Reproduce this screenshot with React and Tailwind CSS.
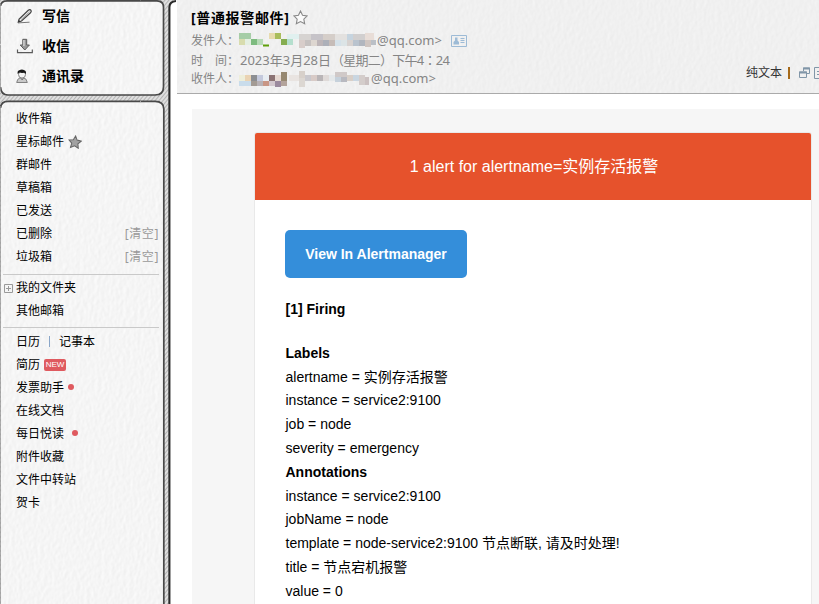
import React from "react";

const SANS = "font-['Noto_Sans','Noto_Sans_CJK_SC',sans-serif]";

function Defs() {
  return (
    <svg width="0" height="0" className="absolute">
      <defs>
        <filter id="paper" x="0" y="0" width="100%" height="100%" colorInterpolationFilters="sRGB">
          <feTurbulence type="fractalNoise" baseFrequency="0.28 0.19" numOctaves="2" seed="4" result="n" />
          <feDiffuseLighting in="n" surfaceScale="0.08" diffuseConstant="1.155" lightingColor="#fdfdfd">
            <feDistantLight azimuth="200" elevation="57" />
          </feDiffuseLighting>
        </filter>
        <filter id="rough" filterUnits="userSpaceOnUse" x="-10" y="-10" width="200" height="640">
          <feTurbulence type="fractalNoise" baseFrequency="0.3" numOctaves="2" seed="7" result="n" />
          <feDisplacementMap in="SourceGraphic" in2="n" scale="1.5" xChannelSelector="R" yChannelSelector="G" />
        </filter>
        <pattern id="hatch" width="3" height="3" patternUnits="userSpaceOnUse" patternTransform="rotate(40)">
          <rect width="3" height="3" fill="#dfdfdf" />
          <rect width="1" height="3" fill="#b4b4b4" />
        </pattern>
      </defs>
    </svg>
  );
}

function Paper({ className = "" }) {
  return (
    <svg className={`pointer-events-none absolute inset-0 h-full w-full ${className}`}>
      <rect width="100%" height="100%" filter="url(#paper)" />
    </svg>
  );
}

function SketchFrame() {
  return (
    <svg className="pointer-events-none absolute left-0 top-0" width="180" height="604">
      <path
        fill="url(#hatch)"
        fillRule="evenodd"
        d="M0 0H177Q170 0 170 6V604H0ZM1 6Q1 1 7 1H157Q163 1 163 7V87Q163 95 155 95H8Q1 95 1 87ZM1 108Q1 101 8 101H155Q163 101 163 109V604H1Z"
      />
      <g filter="url(#rough)" fill="none" stroke="#484848" strokeWidth="1.700">
        <path d="M0.500 6Q1 1 7 0.800H157Q163.500 1 163.500 7V87Q163.500 95 155 95H8Q1 95 0.500 87" />
        <path d="M0.500 108Q1 101.300 8 101.300H155Q163.800 101.300 163.800 109V610" />
        <path d="M169.400 610V7Q169.600 1.500 176 1" stroke="#2b2b2b" strokeWidth="2.100" />
        <path d="M0.300 4V91M0.300 106V610" stroke="#999" strokeWidth="0.900" />
      </g>
    </svg>
  );
}

function PenIcon() {
  return (
    <svg width="18" height="17" viewBox="0 0 18 17" fill="none">
      <path d="M3 11.300 12.300 2.300Q14 1 15 2.400Q15.700 3.700 14.500 4.700L5.500 13 2.300 14Z" fill="#eee" stroke="#444" strokeWidth="1.200" />
      <path d="M5 11.600 13.700 3.700" stroke="#aaa" />
      <path d="M2 14.900 13.500 14.200" stroke="#777" strokeWidth="1" />
      <path d="M2 14.500 3 12 4.500 13.500Z" fill="#333" />
    </svg>
  );
}

function ReceiveIcon() {
  return (
    <svg width="18" height="17" viewBox="0 0 18 17" fill="none">
      <path d="M6.800 1.300H10.700V7H13.400L8.800 12 4.200 7H6.800Z" fill="#999" stroke="#5a5a5a" strokeWidth="1" />
      <path d="M7.900 2V8" stroke="#e2e2e2" strokeWidth="1.200" />
      <path d="M1.500 11.500V14.700H16.300V11.500" stroke="#5a5a5a" strokeWidth="1.200" />
    </svg>
  );
}

function ContactIcon() {
  return (
    <svg width="18" height="17" viewBox="0 0 18 17" fill="none">
      <path d="M0.700 14.500Q1 10.800 4 9.800H7.500Q10.800 10.500 11.300 14.500Z" fill="#c9c9c9" stroke="#777" strokeWidth="0.900" />
      <ellipse cx="6" cy="6.500" rx="3.500" ry="3.600" fill="#f3f3f3" stroke="#777" strokeWidth="0.900" />
      <path d="M1.700 6Q1 3 3.200 2.200Q6 0.600 8.300 2.200Q10.500 3 9.900 6L8.400 4.700 6 5 3.500 4.500Z" fill="#181818" />
      <path d="M4.800 10.300 6.200 12 7.500 10.300" stroke="#666" strokeWidth="0.800" />
    </svg>
  );
}

const STAR = "M7 0.900 8.900 4.900 13.200 5.500 10.100 8.500 10.900 12.900 7 10.800 3.100 12.900 3.900 8.500 0.800 5.500 5.100 4.900Z";

function Main({ icon, children }) {
  return (
    <div className="flex h-[30px] items-center pl-4">
      {icon}
      <span className="ml-2 text-[14px] font-bold leading-[30px] text-black">{children}</span>
    </div>
  );
}

function Row({ children, clear }) {
  return (
    <div className="flex h-[23px] items-center pl-4 pr-[5px] text-[12px] leading-[23px] text-black">
      {children}
      {clear && <span className="ml-auto tracking-[0.600px] text-[#999]">[清空]</span>}
    </div>
  );
}

const Rule = ({ className }) => <div className={`ml-[3px] w-[156px] border-t border-[#c9c9c9] ${className}`} />;
const Dot = ({ className }) => <span className={`-mt-px h-1.5 w-1.5 rounded-full bg-[#df5a5f] ${className}`} />;

function Sidebar() {
  return (
    <aside className="relative h-full w-[177px] shrink-0 bg-white">
      <div className="absolute inset-y-0 left-0 w-[164px] overflow-hidden">
        <Paper />
      </div>
      <SketchFrame />
      <div className="relative w-[164px]">
        <nav className="h-[107px] pt-px">
          <Main icon={<PenIcon />}>写信</Main>
          <Main icon={<ReceiveIcon />}>收信</Main>
          <Main icon={<ContactIcon />}>通讯录</Main>
        </nav>
        <nav>
          <Row>收件箱</Row>
          <Row>
            星标邮件
            <svg className="ml-1" width="14" height="14" viewBox="0 0 14 14">
              <path d={STAR} fill="#a2a2a2" stroke="#666" strokeWidth="1" transform="rotate(6 7 7)" />
            </svg>
          </Row>
          <Row>群邮件</Row>
          <Row>草稿箱</Row>
          <Row>已发送</Row>
          <Row clear>已删除</Row>
          <Row clear>垃圾箱</Row>
          <Rule className="mb-[1px] mt-[6px]" />
          <div className="relative">
            <svg className="absolute left-1 top-[8px]" width="9" height="9" fill="none" stroke="#999">
              <path d="M.5.5H8.500V8.500H.5ZM2 4.500H7M4.500 2V7" />
            </svg>
            <Row>我的文件夹</Row>
          </div>
          <Row>其他邮箱</Row>
          <Rule className="mb-[2px] mt-[5px]" />
          <Row>
            日历
            <span className="ml-[9px] mr-[9px] h-[11px] w-px bg-[#8aa6c8]" />
            记事本
          </Row>
          <Row>
            简历
            <span className="ml-1 h-3 w-[22px] rounded-[2px] bg-[#df5a5f] text-center font-['Liberation_Sans',sans-serif] text-[8px] leading-[12.500px] text-white">
              NEW
            </span>
          </Row>
          <Row>
            发票助手
            <Dot className="ml-1" />
          </Row>
          <Row>在线文档</Row>
          <Row>
            每日悦读
            <Dot className="ml-2" />
          </Row>
          <Row>附件收藏</Row>
          <Row>文件中转站</Row>
          <Row>贺卡</Row>
        </nav>
      </div>
    </aside>
  );
}

const SENDER = [
  [0, 0, 12, 6, "#a6cda6"], [0, 6, 6, 6, "#d8dcae"], [6, 6, 6, 6, "#e4efe2"], [12, 6, 6, 6, "#7dbb7f"],
  [18, 6, 6, 6, "#b7dab7"], [24, 11.500, 6, 2, "#5f9f0a"], [30, 0, 6, 6, "#e7dbaf"], [36, 0, 6, 6, "#a9bd5c"],
  [42, 6, 6, 6, "#85ad50"], [48, 6, 6, 6, "#b5dfce"], [48, 1, 12, 5, "#e0f0ef"],
  [60, 1, 12, 6, "#d6d3d1"], [72, 1, 12, 6, "#c6c3c8"], [84, 1, 12, 6, "#d5cec9"], [96, 1, 12, 6, "#e3e1df"],
  [60, 7, 6, 8, "#d8cdca"], [66, 7, 6, 6, "#c6c1c0"], [72, 7, 6, 6, "#ddd6d0"], [78, 7, 6, 6, "#bdb5b8"],
  [84, 7, 6, 6, "#adb0b9"], [90, 7, 6, 6, "#c6bcb8"], [96, 7, 6, 6, "#d5e1e9"], [102, 7, 6, 6, "#dce4e6"],
  [108, 1, 6, 6, "#c6d4df"], [114, 1, 12, 6, "#d1cfcf"], [108, 7, 6, 6, "#d7d2d0"], [114, 7, 6, 6, "#b9c3ce"],
  [120, 7, 6, 6, "#b1b6bf"], [126, 0, 9, 7, "#e8ddd7"], [126, 7, 6, 7, "#cfc5c1"], [132, 7, 5, 5, "#bbc0c7"],
];

const RECIPIENT = [
  [0, 4, 6, 6, "#eeeeda"], [6, 4, 6, 6, "#ead3b3"], [12, 4, 6, 6, "#8c8e92"], [18, 4, 6, 6, "#c4c9dc"],
  [24, 4, 6, 6, "#e8edf2"], [30, 4, 6, 6, "#8b7374"], [36, 4, 6, 6, "#e6d9d2"], [42, 1, 6, 9, "#968871"],
  [0, 10, 12, 5, "#c9dceb"], [12, 10, 6, 5, "#a39b94"], [18, 10, 6, 5, "#b8b2b6"], [24, 10, 6, 5, "#c99685"],
  [30, 10, 6, 5, "#d3c8ce"], [36, 10, 6, 6, "#9b8a9e"], [42, 10, 6, 5, "#b3a39b"],
  [50, 4, 10, 6, "#e9e4e1"], [60, 0, 6, 7, "#d7d0ca"], [60, 7, 6, 9, "#dcd7d2"], [66, 4, 6, 6, "#c9c8cd"],
  [72, 4, 6, 6, "#d8cbc7"], [78, 4, 6, 6, "#b9b5b7"], [84, 4, 6, 6, "#dfdad8"], [90, 4, 6, 6, "#e4e8ea"],
  [96, 1, 12, 5, "#d0c9c8"], [96, 6, 6, 5, "#c6d1db"], [102, 6, 6, 5, "#b8b9c0"], [108, 4, 6, 6, "#d8cfc8"],
  [114, 4, 6, 6, "#c9d6e1"], [120, 4, 6, 10, "#d4cdcb"], [126, 6, 4, 8, "#cbc1c1"],
];

function Mosaic({ cells, className }) {
  return (
    <svg height="17" className={`shrink-0 ${className}`}>
      {cells.map(([x, y, w, h, fill], i) => (
        <rect key={i} x={x} y={y} width={w} height={h} fill={fill} />
      ))}
    </svg>
  );
}

function MailHeader() {
  return (
    <header className="relative h-[94px] border-b border-[#aaa] bg-[#e6e6e6]">
      <Paper className="opacity-70" />
      <div className="relative pl-[14px] text-[12px] text-[#858585]">
        <div className="flex h-[31px] items-center pt-[3px]">
          <h1 className="text-[14px] font-bold tracking-[0.650px] text-black">[普通报警邮件]</h1>
          <svg className="ml-1" width="15" height="15" viewBox="0 0 14 14">
            <path d={STAR} fill="#fafafa" stroke="#888" />
          </svg>
        </div>
        <div className="flex h-5 items-center">
          <span className="w-12">发件人：</span>
          <Mosaic cells={SENDER} className="w-[138px]" />
          <span className="text-[13px]">@qq.com&gt;</span>
          <svg className="ml-[9px]" width="16" height="12" fill="none" stroke="#9dbbd6">
            <path d="M.5.5H15.500V11.500H.5ZM9.500 3.500H13.500M9.500 5.500H13.500M9.500 7.500H13.500" />
            <path d="M4 2.500H6.500V5.500L8 7V9.500H2.500V7L4 5.500Z" fill="#9dbbd6" stroke="none" />
          </svg>
        </div>
        <div className="flex h-[19px] items-center">
          <span className="w-12 whitespace-pre">时　间：</span>
          <span className="ml-px whitespace-nowrap text-[13px]">
            2023年3月28日
            <span className="tracking-[-0.750px]">
              （星期二）下午4
              <span className="font-['Noto_Sans_CJK_TC',sans-serif]" lang="zh-TW">：</span>
              24
            </span>
          </span>
        </div>
        <div className="flex h-[18px] items-center">
          <span className="w-12">收件人：</span>
          <Mosaic cells={RECIPIENT} className="w-[132px]" />
          <span className="text-[13px]">@qq.com&gt;</span>
        </div>
      </div>
      <div className="absolute left-[569px] top-[64px] flex h-[18px] w-[73px] items-center overflow-hidden whitespace-nowrap text-[12px] text-[#333]">
        <span className="shrink-0">纯文本</span>
        <span className="ml-[6px] h-3 w-0.5 shrink-0 bg-[#a66a1a]" />
        <svg className="ml-[9px] shrink-0" width="22" height="12" fill="none" stroke="#8196a8">
          <path d="M4.500 4V1H10.500V6.500H8M.5 5H7.500V10.500H.5Z" />
          <path d="M4 1.500H11M0 5.500H8" strokeWidth="2" />
          <path d="M15.500.5H24V11.500H15.500ZM18 4.500H22M18 7.500H22" />
        </svg>
      </div>
    </header>
  );
}

const B = ({ children }) => <p className="font-bold">{children}</p>;

function MailBody() {
  return (
    <div className="ml-[15px] mt-[15px] h-[495px] bg-[#f6f6f6] pl-[62px] pt-[23px] font-['Liberation_Sans','Noto_Sans_CJK_SC',sans-serif] text-black">
      <article className="h-[520px] w-[558px] overflow-hidden rounded-[3px] border border-[#e9e9e9] bg-white">
        <div className="flex h-[67px] items-center justify-center bg-[#e6522c] pl-[2px] text-[16px] text-white">
          1 alert for alertname=实例存活报警
        </div>
        <div className="pl-[30px] pt-[30px] text-[14px] leading-[23.800px]">
          <a className="flex h-12 w-[182px] items-center justify-center rounded-[5px] bg-[#348eda] pt-px font-bold text-white">
            View In Alertmanager
          </a>
          <div className="mt-[20px] pl-[0.500px]">
            <B>[1] Firing</B>
            <div className="mt-[20px]">
              <B>Labels</B>
              <p>alertname = 实例存活报警</p>
              <p>instance = service2:9100</p>
              <p>job = node</p>
              <p>severity = emergency</p>
              <B>Annotations</B>
              <p>instance = service2:9100</p>
              <p>jobName = node</p>
              <p>template = node-service2:9100 节点断联, 请及时处理!</p>
              <p>title = 节点宕机报警</p>
              <p>value = 0</p>
            </div>
          </div>
        </div>
      </article>
    </div>
  );
}

export default function App() {
  return (
    <div className={`flex h-[604px] w-[819px] overflow-hidden bg-white ${SANS}`}>
      <Defs />
      <Sidebar />
      <main className="min-w-0 flex-1 overflow-hidden">
        <MailHeader />
        <MailBody />
      </main>
    </div>
  );
}
